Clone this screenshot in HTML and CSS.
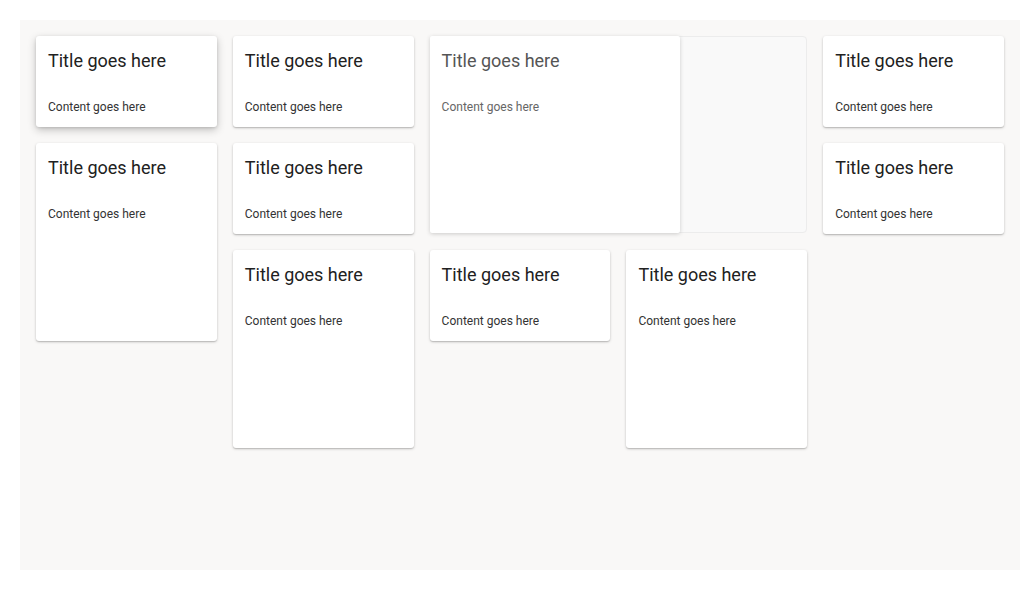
FILE: index.html
```html
<!DOCTYPE html>
<html>
<head>
<meta charset="utf-8">
<link rel="stylesheet" href="styles.css">
</head>
<body>
<div class="board">
  <div class="grid">
    <div class="card hover c1 r1"><div class="title">Title goes here</div><div class="content">Content goes here</div></div>
    <div class="card c2 r1"><div class="title">Title goes here</div><div class="content">Content goes here</div></div>
    <div class="slot c3 r1 span2 tall">
      <div class="card dragging"><div class="title">Title goes here</div><div class="content">Content goes here</div></div>
    </div>
    <div class="card c5 r1"><div class="title">Title goes here</div><div class="content">Content goes here</div></div>
    <div class="card c1 r2 tall"><div class="title">Title goes here</div><div class="content">Content goes here</div></div>
    <div class="card c2 r2"><div class="title">Title goes here</div><div class="content">Content goes here</div></div>
    <div class="card c5 r2"><div class="title">Title goes here</div><div class="content">Content goes here</div></div>
    <div class="card c2 r3 tall"><div class="title">Title goes here</div><div class="content">Content goes here</div></div>
    <div class="card c3 r3"><div class="title">Title goes here</div><div class="content">Content goes here</div></div>
    <div class="card c4 r3 tall"><div class="title">Title goes here</div><div class="content">Content goes here</div></div>
  </div>
</div>
</body>
</html>
```
FILE: styles.css
```css
html, body { margin: 0; padding: 0; background: #fff; }
body { padding: 20px; font-family: Roboto, "Liberation Sans", sans-serif; }
.board {
  width: 1000px;
  height: 550px;
  background: #f9f8f7;
  box-sizing: border-box;
  padding: 16px;
}
.grid {
  display: grid;
  grid-template-columns: repeat(5, 1fr);
  grid-auto-rows: 91px;
  gap: 16px;
}
.c1 { grid-column: 1; }
.c2 { grid-column: 2; }
.c3 { grid-column: 3; }
.c4 { grid-column: 4; }
.c5 { grid-column: 5; }
.r1 { grid-row-start: 1; }
.r2 { grid-row-start: 2; }
.r3 { grid-row-start: 3; }
.tall { grid-row-end: span 2; }
.span2 { grid-column-end: span 2; }
.card {
  background: #fff;
  border-radius: 3px;
  box-shadow: 0 1px 3px rgba(0,0,0,0.2), 0 1px 1px rgba(0,0,0,0.12);
  padding: 13px 12px 12px;
  box-sizing: border-box;
}
.card.hover {
  box-shadow: 0 3px 8px rgba(0,0,0,0.22), 0 1px 3px rgba(0,0,0,0.12);
}
.title {
  font-size: 18px;
  line-height: 24px;
  color: #212121;
}
.content {
  font-size: 12px;
  line-height: 16px;
  color: #333;
  margin-top: 26px;
}
.slot {
  position: relative;
  background: #f9f9f9;
  border: 1px solid #ececec;
  border-radius: 4px;
  box-sizing: border-box;
  height: 197px;
}
.card.dragging {
  position: absolute;
  left: -1px;
  top: -1px;
  width: 250px;
  height: 197px;
  box-shadow: 0 1px 4px rgba(0,0,0,0.18);
  border-radius: 2px;
}
.dragging .title { color: #555; }
.dragging .content { color: #666; }
```
